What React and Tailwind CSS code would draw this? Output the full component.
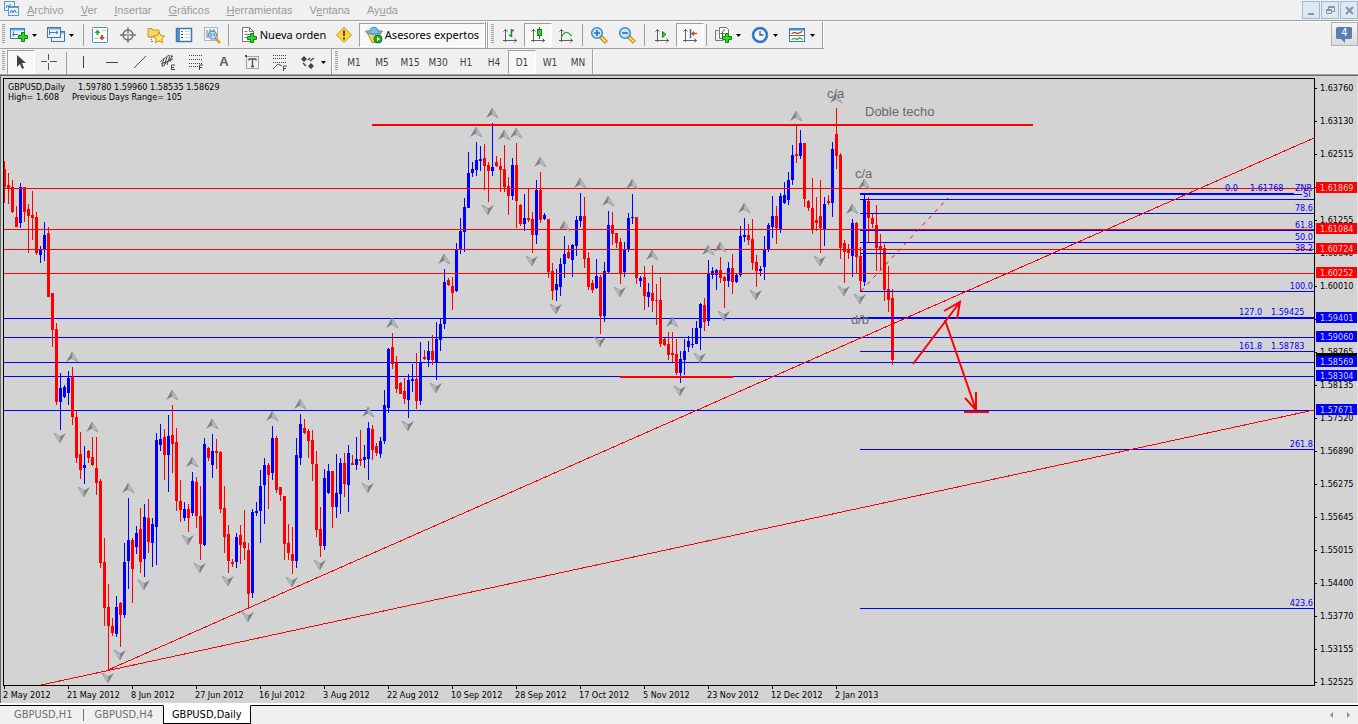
import React, { useState } from 'react';
import clsx from 'clsx';

const RED = '#ff0000';
const BLUE = '#0000ff';
const CHART_BG = '#d3d3d3';

// one entry per daily bar: direction, high, body top, body bottom, low
const BARS = `
r 161 169 187 203|r 173 185 188 204|r 180 187 212 213|r 206 217 227 227|b 183 187 223 228|r 187 187 212 222
r 204 209 216 253|r 191 215 218 240|r 212 217 253 255|b 246 249 255 263|b 222 235 249 261|r 227 233 297 297
r 293 293 330 347|r 323 329 402 405|b 373 388 402 430|b 385 387 397 398|b 371 378 393 405|r 367 377 417 425
r 411 417 458 463|r 432 454 470 479|b 446 465 468 484|r 450 451 458 463|r 437 457 465 466|r 437 468 483 495
r 479 481 563 568|r 538 562 608 626|r 584 607 626 670|r 618 626 633 636|b 596 607 634 637|r 602 603 615 647
b 543 562 615 618|b 498 540 561 589|r 538 540 569 603|b 526 533 547 554|r 508 529 562 573|b 504 517 559 577
r 499 518 542 553|b 518 524 543 567|b 433 440 527 565|b 424 439 445 451|r 429 437 455 480|b 415 436 455 492
r 405 435 444 473|r 428 442 501 511|r 480 501 510 522|b 502 509 518 521|r 504 509 518 532|b 472 481 513 516
r 477 482 516 528|r 486 516 544 560|b 438 444 545 546|r 447 448 458 461|b 434 451 465 478|r 439 451 453 469
r 451 452 509 513|r 486 508 537 553|r 525 534 561 573|r 559 562 564 567|b 533 537 562 568|r 525 535 545 564
r 510 542 548 560|r 543 550 594 609|b 509 512 593 598|b 502 511 513 516|b 470 486 511 543|b 458 465 485 524
r 463 465 475 509|b 426 438 473 480|r 436 438 490 493|r 487 487 495 501|r 496 496 544 560|r 524 543 553 560
r 527 554 561 574|b 438 455 561 568|b 414 424 458 465|r 419 428 433 434|r 429 431 441 458|r 430 440 464 481
r 451 464 530 537|r 507 529 546 557|b 469 478 546 550|b 464 471 493 494|r 471 471 507 528|b 454 493 507 518
b 458 463 494 514|r 453 463 484 497|b 445 453 485 512|r 455 463 465 465|b 437 459 465 470|r 430 459 461 466
b 445 457 460 468|b 422 428 459 480|r 425 429 450 460|r 443 446 453 456|b 437 441 454 458|b 390 405 441 444
b 348 349 408 413|r 333 347 364 369|r 356 363 389 393|r 382 383 394 394|r 378 391 399 404|b 374 380 400 418
b 364 379 381 392|r 353 379 401 409|b 342 362 401 405|r 350 357 359 360|b 341 351 360 367|r 335 351 360 365
b 322 339 362 380|b 319 324 340 351|b 269 282 324 329|r 278 280 285 286|r 277 286 293 310|b 243 249 291 292
b 218 231 249 254|b 198 207 232 252|b 152 173 208 208|b 162 169 173 177|b 142 160 170 176|b 146 159 161 171
r 144 158 166 190|r 162 165 171 202|b 123 167 171 176|r 156 162 166 167|r 158 166 170 192|r 145 169 187 192
r 177 186 196 215|b 158 165 196 200|r 143 165 201 228|r 204 205 224 226|b 194 218 224 231|r 189 218 220 222
r 212 219 235 253|b 180 190 235 244|r 172 190 220 223|b 213 215 219 220|r 219 219 272 278|r 263 271 291 300
b 269 284 290 301|b 258 264 287 296|b 236 254 264 278|r 245 252 258 259|b 244 245 260 277|b 216 220 246 256
b 193 216 221 227|r 197 216 259 268|r 252 258 287 290|r 280 283 290 293|b 259 276 288 289|r 275 277 316 334
b 262 271 316 322|b 211 225 272 273|r 212 225 234 245|r 233 233 243 248|r 238 242 273 284|b 242 250 272 277
b 213 218 249 252|b 194 217 218 224|r 217 217 278 284|b 276 278 281 287|r 266 277 296 310|b 283 292 297 307
r 265 293 301 312|r 284 300 301 325|r 277 300 344 347|r 338 339 345 346|r 332 344 355 360|r 332 353 355 362
r 339 354 373 375|b 351 359 373 383|b 339 351 360 375|b 336 341 347 352|b 328 344 345 348|b 321 328 344 344
b 303 304 328 350|r 298 305 322 331|b 260 273 321 326|b 267 271 275 279|b 269 270 275 290|r 257 270 278 283
r 276 277 281 308|b 262 268 281 287|r 254 268 282 294|b 274 275 282 283|b 226 236 275 277|b 218 235 237 242
r 224 235 240 245|r 219 239 263 270|r 255 262 271 287|b 266 269 271 276|b 236 249 267 280|b 223 225 249 252
b 196 216 227 238|r 206 216 228 244|b 193 196 229 233|b 182 195 203 204|b 172 180 200 205|b 145 155 180 185
r 126 154 156 163|b 130 143 156 159|r 143 143 199 207|r 200 201 208 211|r 178 208 229 234|r 197 220 223 231
r 180 216 228 253|b 197 204 229 246|r 195 201 203 205|b 142 149 203 217|r 108 134 156 169|r 153 155 248 259
r 240 243 252 283|r 244 249 253 259|b 219 223 256 277|r 222 223 257 274|r 247 256 281 291|b 194 199 282 286
r 197 201 218 242|r 214 218 224 228|r 205 225 248 271|r 234 246 250 270|r 244 248 290 301|r 266 289 300 312
r 289 298 360 365`
  .trim()
  .split(/[|\n]/)
  .map((row) => {
    const [dir, ...v] = row.split(' ');
    return { color: dir === 'r' ? RED : BLUE, high: +v[0], top: +v[1], bottom: +v[2], low: +v[3] };
  });

// indexes of the bars that carry a fractal mark
const FRACTALS_UP = [17, 22, 31, 42, 47, 52, 67, 74, 91, 97, 110, 118, 122, 125, 128, 134, 140, 144, 151, 157, 162, 167, 176, 179, 185, 198, 208, 212, 215];
const FRACTALS_DOWN = [14, 20, 26, 29, 35, 46, 49, 56, 61, 72, 79, 91, 101, 108, 121, 132, 138, 149, 154, 169, 174, 180, 188, 204, 210, 214];

const LEVELS = [
  { y: 188, price: '1.61869', color: RED },
  { y: 229, price: '1.61084', color: RED },
  { y: 249, price: '1.60724', color: RED },
  { y: 273, price: '1.60252', color: RED },
  { y: 318, price: '1.59401', color: BLUE },
  { y: 337, price: '1.59060', color: BLUE },
  { y: 362, price: '1.58569', color: BLUE },
  { y: 376, price: '1.58304', color: BLUE },
  { y: 410, price: '1.57671', color: BLUE },
];

const FIBS = [
  { y: 193, thick: true },
  { y: 199 },
  { y: 213, label: '78.6' },
  { y: 230, label: '61.8' },
  { y: 242, label: '50.0' },
  { y: 253, label: '38.2' },
  { y: 291, label: '100.0' },
  { y: 317, thick: true, label: '127.0', price: '1.59425' },
  { y: 351, label: '161.8', price: '1.58783' },
  { y: 449, label: '261.8' },
  { y: 608, label: '423.6' },
];

const PRICES = ['1.63760', '1.63130', '1.62515', '', '1.61255', '1.60640', '1.60010', '', '1.58765', '1.58135', '1.57520', '1.56890', '1.56275', '1.55645', '1.55015', '1.54400', '1.53770', '1.53155', '1.52525'];
const DATES = ['2 May 2012', '21 May 2012', '8 Jun 2012', '27 Jun 2012', '16 Jul 2012', '3 Aug 2012', '22 Aug 2012', '10 Sep 2012', '28 Sep 2012', '17 Oct 2012', '5 Nov 2012', '23 Nov 2012', '12 Dec 2012', '2 Jan 2013'];

const barX = (i) => 4 + i * 4;

function Fractal({ x, y, down }) {
  // the down mark is the up mark turned by 180 degrees
  return (
    <g transform={down ? `translate(${x} ${y + 10}) rotate(180)` : `translate(${x} ${y})`}>
      <path d="M0 0 L-6 10 L0 6.500 Z" fill="#808080" />
      <path d="M0 0 L6 10 L0 6.500 Z" fill="#b4c4d0" stroke="#909090" strokeWidth=".8" />
    </g>
  );
}

function Chart() {
  return (
    <svg viewBox="0 76 1358 627" className="block w-full h-auto bg-[#d3d3d3] font-['DejaVu_Sans_Condensed',Tahoma,sans-serif] text-[9px]" role="img" aria-label="GBPUSD,Daily">
      <rect x="0" y="76" width="1" height="627" fill="#696969" />
      <rect x="1357" y="76" width="1" height="627" fill="#e3e3e3" />

      <g shapeRendering="crispEdges">
        {LEVELS.map((l) => (
          <rect key={l.y} x="4" y={l.y} width="1310" height="1" fill={l.color} />
        ))}
      </g>

      {/* candles */}
      <g shapeRendering="crispEdges">
        {BARS.map((b, i) => (
          <g key={i} fill={b.color}>
            <rect x={barX(i)} y={b.high} width="1" height={b.low - b.high} />
            <rect x={i ? barX(i) - 1 : 4} y={b.top} width={i ? 3 : 2} height={Math.max(1, b.bottom - b.top)} />
          </g>
        ))}
      </g>

      {/* resistance levels and fibonacci run over the bars */}
      <g shapeRendering="crispEdges">
        {LEVELS.filter((l) => l.color === RED).map((l) => (
          <rect key={l.y} x="4" y={l.y} width="1310" height="1" fill={l.color} />
        ))}
        <rect x="372" y="124" width="661" height="2" fill={RED} />
        <rect x="620" y="376" width="113" height="2" fill={RED} />
        {FIBS.map((f) => (
          <rect key={f.y} x="860" y={f.y} width={f.y === 193 ? 434 : 454} height={f.thick ? 2 : 1} fill={BLUE} />
        ))}
        <rect x="1294" y="194" width="8" height="1" fill={BLUE} />
      </g>

      {FRACTALS_UP.map((i) => (
        <Fractal key={i} x={barX(i)} y={BARS[i].high - 15} />
      ))}
      {FRACTALS_DOWN.map((i) => (
        <Fractal key={i} x={barX(i)} y={BARS[i].low + 3} down />
      ))}

      {/* trend lines */}
      <g stroke={RED} fill="none" shapeRendering="crispEdges">
        <path d="M108 670 L1314 138" />
        <path d="M41 685 L1314 410" />
      </g>
      <path d="M861 291 L948 198" stroke={RED} strokeDasharray="4 5" />
      <g stroke={RED} strokeWidth="2" fill="none">
        <path d="M913 364 L960 302 M944 311 L960 302 L957 319" />
        <path d="M945 320 L976 410 M965 398 L976 410 M976 392 V410" />
        <path d="M964 412 H989" />
      </g>

      <g fill="#696969" className="font-['Liberation_Sans',Arial,sans-serif] text-[13px]">
        <text x="827" y="98">c/a</text>
        <text x="865" y="116">Doble techo</text>
        <text x="855" y="178">c/a</text>
        <text x="851" y="324">d/b</text>
      </g>

      <g fill={BLUE}>
        <text x="1225" y="191">0.0</text>
        <text x="1250" y="191">1.61768</text>
        <text x="1295" y="191">ZNR</text>
        <text x="1303" y="197">SI</text>
        {FIBS.filter((f) => f.label).map((f) =>
          f.price ? (
            <g key={f.y}>
              <text x="1239" y={f.y - 2}>{f.label}</text>
              <text x="1271" y={f.y - 2}>{f.price}</text>
            </g>
          ) : (
            <text key={f.y} x="1313" y={f.y - 2} textAnchor="end">{f.label}</text>
          )
        )}
      </g>

      <text x="8" y="90">GBPUSD,Daily</text>
      <text x="78" y="90">1.59780 1.59960 1.58535 1.58629</text>
      <text x="8" y="100">High= 1.608</text>
      <text x="72" y="100">Previous Days Range= 105</text>

      {/* frame and axes */}
      <g shapeRendering="crispEdges">
        <rect x="3" y="78" width="1312" height="1" />
        <rect x="3" y="78" width="1" height="608" />
        <rect x="3" y="685" width="1312" height="1" />
        <rect x="1314" y="78" width="1" height="608" />
        {PRICES.map((p, i) => (
          <rect key={i} x="1315" y={88 + i * 33} width="2" height="1" />
        ))}
        {DATES.map((d, i) => (
          <rect key={d} x={4 + i * 64} y="686" width="1" height="3" />
        ))}
      </g>
      {PRICES.map((p, i) => (
        <text key={i} x="1320" y={91 + i * 33}>{p}</text>
      ))}
      <rect x="1316" y="353" width="41" height="11" />
      {LEVELS.map((l) => (
        <g key={l.y}>
          <rect x="1316" y={l.y - 6} width="41" height="11" fill={l.color} shapeRendering="crispEdges" />
          <text x="1320" y={l.y + 3} fill={CHART_BG}>{l.price}</text>
        </g>
      ))}
      {DATES.map((d, i) => (
        <text key={d} x={3 + i * 64} y="698">{d}</text>
      ))}
    </svg>
  );
}

/* ---------- toolbar icons ---------- */

function Icon({ children, className }) {
  return (
    <svg viewBox="0 0 18 18" className={clsx('w-[18px] h-[18px] shrink-0', className)} fill="none">
      {children}
    </svg>
  );
}

const Plus = ({ x, y }) => (
  <path transform={`translate(${x} ${y})`} d="M3.500 .5h3v3h3v3h-3v3h-3v-3h-3v-3h3z" fill="#2fd62f" stroke="#0a8a0a" />
);

const Window = ({ x = 0, y = 0, w = 12, h = 9 }) => (
  <g transform={`translate(${x} ${y})`}>
    <rect x=".5" y=".5" width={w} height={h} fill="#eaf4fc" stroke="#3b7ab5" />
    <rect x="1" y="1" width={w - 1} height="1.500" fill="#6fa8dc" />
  </g>
);

const Axes = () => (
  <path d="M4.500 3v13M2 14.500h14M2.500 5.500l2-2 2 2M13.500 12.500l2 2-2 2" stroke="#606060" />
);

const ICONS = {
  app: (
    <>
      <rect x="2.500" y="1.500" width="10" height="9" fill="#eaf4fc" stroke="#5b9bd5" />
      <rect x="6.500" y="6.500" width="10" height="9" fill="#eaf4fc" stroke="#5b9bd5" />
      <path d="M4 8l1.500-3 1.500 2 1.500-3M8 13l1.500-3 1.500 3 1.500-3 2 3" stroke="#3b6fb0" />
      <path d="M7 7.500h9" stroke="#5b9bd5" />
    </>
  ),
  newChart: (
    <>
      <Window x={0} y={2} w={14} h={10} />
      <path d="M3.500 5.500v5M2 8.500h6" stroke="#4a7ba8" />
      <Plus x={8} y={6} />
    </>
  ),
  profiles: (
    <>
      <Window x={4} y={5} w={13} h={10} />
      <Window x={0} y={1} w={13} h={10} />
      <path d="M2.500 4v5M2 6.500h9M9 5l2 1.500-2 1.500" stroke="#4a7ba8" />
    </>
  ),
  market: (
    <>
      <rect x="1.500" y="1.500" width="15" height="15" rx="1" fill="#fff" stroke="#4a90d0" />
      <path d="M6.500 3.500l3 3.500h-2v2h-2V7h-2z" fill="#1fae1f" />
      <path d="M11 14.500L8 11h2V9h2v2h2z" fill="#e0401f" />
      <path d="M11 4.500h4M3 12.500h4" stroke="#b9c9d6" />
    </>
  ),
  target: (
    <>
      <circle cx="9" cy="9" r="5" stroke="#707070" strokeWidth="1.500" />
      <path d="M9 1v16M1 9h16" stroke="#707070" strokeWidth="1.300" />
      <circle cx="9" cy="9" r="2" fill="#efefef" />
      <path d="M9 7v4M7 9h4" stroke="#888" />
    </>
  ),
  navigator: (
    <>
      <path d="M1 2.500h4l1 1.500h6v7H1z" fill="#f5d76a" stroke="#c49a24" />
      <path d="M4.500 11v6M5 15.500h2" stroke="#777" strokeDasharray="1 1" />
      <path d="M12 6l1.700 3.600 4 .5-3 2.700.8 4-3.500-2-3.500 2 .8-4-3-2.700 4-.5z" fill="#ffe680" stroke="#c88e10" />
    </>
  ),
  data: (
    <>
      <rect x="1.500" y="2.500" width="15" height="13" fill="#fff" stroke="#3b7ab5" strokeWidth="1.500" />
      <rect x="2" y="3" width="3" height="12" fill="#4a90d0" />
      <path d="M6 5.500h2" stroke="#d04030" />
      <path d="M6 8.500h2M6 11.500h2" stroke="#333" />
      <path d="M9.500 5.500h6M9.500 8.500h6M9.500 11.500h6" stroke="#c6d8e8" />
    </>
  ),
  tester: (
    <>
      <rect x="1.500" y="1.500" width="13" height="13" fill="#f5f8fa" stroke="#a5b8c8" />
      <path d="M4 4v8M7 3v4M11 3v4" stroke="#5e7a92" />
      <path d="M12 12l5 5" stroke="#d9a520" strokeWidth="2.500" />
      <circle cx="9.500" cy="9" r="4" fill="#bfe0f8" stroke="#6592b8" strokeWidth="1.300" />
      <path d="M8 7v4M11 7v3" stroke="#4a7ba8" />
    </>
  ),
  order: (
    <>
      <path d="M2.500 1.500h7l4 4v10h-11z" fill="#fff" stroke="#777" />
      <path d="M9.500 1.500v4h4M4.500 5.500h3M4.500 8.500h6M4.500 11.500h4" stroke="#777" />
      <Plus x={7} y={7} />
    </>
  ),
  warning: (
    <>
      <path d="M9 1.500L16.500 9 9 16.500 1.500 9z" fill="#fbd33c" stroke="#c7940f" strokeLinejoin="round" />
      <path d="M9 4.500v5.500M9 11.500v2" stroke="#6b4700" strokeWidth="2" />
    </>
  ),
  experts: (
    <>
      <path d="M2.500 7h13L12.500 16.500H7z" fill="#f3cf52" stroke="#bd9220" />
      <path d="M5 5c0-5 8-5 8 0 2 0 4-.5 4.500.5-2 3.500-15 3.500-17 0C1 4.500 3 5 5 5z" fill="#79bde8" stroke="#3b83b8" />
      <circle cx="13" cy="13" r="4" fill="#1fae2f" stroke="#0a7d18" />
      <path d="M12 11l3 2-3 2z" fill="#fff" />
    </>
  ),
  bars: (
    <>
      <Axes />
      <path d="M10.500 3v8M8 9.500h2.500M10.500 4.500H13" stroke="#0b8f1a" strokeWidth="1.500" />
    </>
  ),
  candles: (
    <>
      <Axes />
      <path d="M10.500 1v12" stroke="#0b7d14" />
      <rect x="8.500" y="3.500" width="4" height="6" fill="#2fd62f" stroke="#0b7d14" />
    </>
  ),
  line: (
    <>
      <Axes />
      <path d="M4.500 11c3-6 6-6 10-1" stroke="#2fa83a" strokeWidth="1.300" />
    </>
  ),
  zoomIn: (
    <>
      <path d="M10.500 10.500l6 6" stroke="#b8860b" strokeWidth="4" />
      <path d="M11 11l5 5" stroke="#ffe066" strokeWidth="2" />
      <circle cx="7" cy="7" r="5.300" fill="#c7e6fb" stroke="#4088c8" strokeWidth="1.500" />
      <path d="M4 7h6M7 4v6" stroke="#2b6fb0" strokeWidth="1.600" />
    </>
  ),
  zoomOut: (
    <>
      <path d="M10.500 10.500l6 6" stroke="#b8860b" strokeWidth="4" />
      <path d="M11 11l5 5" stroke="#ffe066" strokeWidth="2" />
      <circle cx="7" cy="7" r="5.300" fill="#c7e6fb" stroke="#4088c8" strokeWidth="1.500" />
      <path d="M4 7h6" stroke="#2b6fb0" strokeWidth="1.600" />
    </>
  ),
  scroll: (
    <>
      <Axes />
      <path d="M9.500 5.500l3.500 3-3.500 3z" fill="#35c744" stroke="#0b8f1a" />
    </>
  ),
  shift: (
    <>
      <Axes />
      <path d="M9.500 3v9" stroke="#2b6fb0" strokeWidth="1.500" />
      <path d="M11 7.500h5M13 5.500l-2 2 2 2" stroke="#d04a10" strokeWidth="1.300" />
    </>
  ),
  indicators: (
    <>
      <path d="M5.500 1.500h7l2 2v9h-9z" fill="#fff" stroke="#777" />
      <path d="M1.500 4.500h3M1.500 4.500v10h8" stroke="#777" />
      <path d="M11 4c-2 0-2.500 1-2.500 3v4M6.500 7.500h4" stroke="#555" />
      <Plus x={8} y={7} />
    </>
  ),
  clock: (
    <>
      <circle cx="9" cy="9" r="7" fill="#eaf5ff" stroke="#1b66b8" strokeWidth="2.500" />
      <circle cx="9" cy="9" r="7.500" stroke="#5ba4e6" strokeWidth=".7" />
      <path d="M9 5v4h3.500" stroke="#555" strokeWidth="1.300" />
    </>
  ),
  template: (
    <>
      <rect x="1.500" y="2.500" width="15" height="13" fill="#fff" stroke="#3b7ab5" />
      <path d="M2 3.500h14" stroke="#4a90d0" strokeWidth="2" />
      <path d="M2 9.500h14" stroke="#3b7ab5" />
      <path d="M3.500 7.500l3-1 3 1 5-2" stroke="#c03010" strokeWidth="1.200" />
      <path d="M3.500 13.500l3-1 3 1 2-2 3 2" stroke="#2fa83a" strokeWidth="1.200" />
    </>
  ),
  cursor: <path d="M5 2v12l3-3 2 5 2-1-2-5h4z" fill="#404040" />,
  cross: <path d="M8.500 1v6M8.500 10v7M1 8.500h6M10 8.500h7" stroke="#555" />,
  vline: <path d="M8.500 3v12" stroke="#404040" />,
  hline: <path d="M3 9.500h12" stroke="#404040" />,
  trend: <path d="M3 15L15 3" stroke="#505050" />,
  channel: (
    <>
      <path d="M1 9L10 2M3 14L14 3M2 11l12-5M5 5l-2 8M8 4l-3 9M11 2L8 12M13 2l-2 7" stroke="#555" />
      <path d="M12.500 17v-5H16M12.500 14.500H15M12.500 16.500H16" stroke="#444" />
    </>
  ),
  fibo: (
    <>
      <path d="M2 2.500h14M2 6.500h14M2 10.500h14M2 13.500h9" stroke="#444" strokeDasharray="1 1" />
      <path d="M12.500 17v-5H16M12.500 14.500H15" stroke="#444" />
    </>
  ),
  label: (
    <>
      <rect x="3.500" y="3.500" width="12" height="12" stroke="#555" strokeDasharray="1 1" />
      <path d="M6 6h7M9.500 6v8M6 5.500v2M13 5.500v2M8 13.500h3" stroke="#505050" strokeWidth="1.300" />
      <rect x="2" y="2" width="2" height="2" fill="#444" />
    </>
  ),
  fan: (
    <>
      <path d="M2 2.500h14M2 5.500h14M2 9.500h14" stroke="#444" strokeDasharray="1 1" />
      <path d="M2 16l5-5 4 2M12.500 18v-5H16M12.500 15.500H15" stroke="#505050" />
    </>
  ),
  arrows: (
    <>
      <path d="M5 3l3 3-3 3-3-3zM12 10l3 3-3 3-3-3z" fill="#444" />
      <path d="M4 10l3 3M9 7l2-2M11 8l4-3" stroke="#444" strokeWidth="1.400" />
    </>
  ),
};

const Caret = () => (
  <svg viewBox="0 0 5 3" className="w-[5px] h-[3px] ml-1 shrink-0">
    <path d="M0 0h5L2.500 3z" />
  </svg>
);

function ToolButton({ icon, label, pressed, menu, children, className, onClick }) {
  return (
    <button
      type="button"
      aria-label={label}
      aria-pressed={pressed}
      onClick={onClick}
      className={clsx(
        'flex items-center h-6 shrink-0 border',
        !menu && 'justify-center',
        className || (menu ? 'w-[37px] pl-[2px]' : 'w-7'),
        pressed ? 'border-t-[#a0a0a0] border-l-[#a0a0a0] border-b-white border-r-white bg-[#f8f8f8]' : 'border-transparent'
      )}
    >
      {icon && <Icon>{ICONS[icon]}</Icon>}
      {children}
      {menu && <Caret />}
    </button>
  );
}

const Grip = () => (
  <div className="w-[3px] h-5 mx-[2px] mt-[2px] self-start shrink-0 bg-[repeating-linear-gradient(#a0a0a0_0_1px,#f0f0f0_1px_2px)]" />
);

const Sep = ({ className = 'mx-[2px]' }) => <div className={clsx('w-px h-[22px] shrink-0 bg-[#a0a0a0]', className)} />;

const End = () => <div className="w-[2px] self-stretch shrink-0 border-l border-[#a0a0a0] bg-white" />;

// [text before the access key, access key, rest]
const MENU = [
  ['', 'A', 'rchivo'],
  ['', 'V', 'er'],
  ['', 'I', 'nsertar'],
  ['', 'G', 'ráficos'],
  ['', 'H', 'erramientas'],
  ['V', 'e', 'ntana'],
  ['Ay', 'u', 'da'],
];

const FRAMES = ['M1', 'M5', 'M15', 'M30', 'H1', 'H4', 'D1', 'W1', 'MN'];

export default function App() {
  const [frame, setFrame] = useState('D1');
  const [mode, setMode] = useState('candles');

  return (
    <div className="flex flex-col w-full bg-[#f0f0f0] font-['DejaVu_Sans_Condensed',Tahoma,sans-serif] text-black">
      {/* menu bar */}
      <nav className="flex items-center h-[22px] pl-[2px] border-b border-white shadow-[inset_0_-1px_0_#a0a0a0]">
        <Icon className="mb-[3px] mr-[7px]">{ICONS.app}</Icon>
        <div className="flex flex-1 gap-[17px] pb-px font-['Liberation_Sans',Arial,sans-serif] text-[11px] leading-4 text-[#9a9a9a]">
          {MENU.map(([before, key, rest]) => (
            <a key={rest} href="#" className="whitespace-nowrap">
              {before}<span className="underline">{key}</span>{rest}
            </a>
          ))}
        </div>
        <div className="flex gap-px pb-px">
          {[
            ['Minimizar', 'M5 12h6'],
            ['Restaurar', 'M6.500 7V4.500h6v5H10M4.500 7.500h5v4h-5zM4.500 8.500h5M6.500 5.500h6'],
            ['Cerrar', 'M5 5l7 7M12 5l-7 7'],
          ].map(([name, d], i) => (
            <button key={name} type="button" aria-label={name} className="w-[18px] h-[18px] border border-[#a3b8cc] bg-[#dce9f5]">
              <svg viewBox="0 0 16 16" className="w-4 h-4"><path d={d} fill="none" stroke="#8296a8" strokeWidth={i === 1 ? 1 : 2} /></svg>
            </button>
          ))}
        </div>
      </nav>

      {/* main toolbar */}
      <div className="flex h-[27px]">
        <div className="flex items-center border-b border-[#a0a0a0]">
          <Grip />
          <ToolButton icon="newChart" label="Nuevo gráfico" menu />
          <ToolButton icon="profiles" label="Perfiles" menu />
          <Sep />
          <ToolButton icon="market" label="Observación del mercado" />
          <ToolButton icon="target" label="Ventana de datos" />
          <ToolButton icon="navigator" label="Navegador" />
          <ToolButton icon="data" label="Terminal" />
          <ToolButton icon="tester" label="Probador" />
          <Sep className="ml-[2px] mr-2" />
          <ToolButton icon="order" label="Nueva orden" className="w-[92px]">
            <span className="ml-[2px] font-['Noto_Sans',sans-serif] text-[11px] whitespace-nowrap">Nueva orden</span>
          </ToolButton>
          <ToolButton icon="warning" label="Alertas" className="w-[30px]" />
          <ToolButton icon="experts" label="Asesores expertos" pressed className="w-[126px]">
            <span className="ml-[2px] font-['Noto_Sans',sans-serif] text-[11px] whitespace-nowrap">Asesores expertos</span>
          </ToolButton>
          <End />
          <End />
          <Grip />
          {['bars', 'candles', 'line'].map((m) => (
            <ToolButton key={m} icon={m} label={m} pressed={mode === m} onClick={() => setMode(m)} />
          ))}
          <Sep />
          <ToolButton icon="zoomIn" label="Acercar" />
          <ToolButton icon="zoomOut" label="Alejar" />
          <Sep className="mx-[3px]" />
          <ToolButton icon="scroll" label="Desplazamiento" />
          <ToolButton icon="shift" label="Desplazar gráfico" pressed />
          <Sep className="ml-[2px] mr-1" />
          <ToolButton icon="indicators" label="Indicadores" menu />
          <ToolButton icon="clock" label="Períodos" menu />
          <ToolButton icon="template" label="Plantillas" menu />
          <End />
        </div>
        <button type="button" className="relative ml-auto w-[27px] h-6 flex items-start justify-center pt-1 border border-[#b0b0b0] bg-linear-to-b from-[#f4f4f4] to-[#dcdcdc]">
          <svg viewBox="0 0 18 16" className="absolute w-[18px] h-4">
            <path d="M2 0h13l1 1v10l-1 1H9v4l-4-4H1l-1-1V1z" fill="#5c7cb4" />
          </svg>
          <span className="relative text-[11px] leading-3 text-white">4</span>
        </button>
      </div>

      {/* drawing tools and time frames */}
      <div className="flex items-end h-[25px]">
        <Grip />
        <ToolButton icon="cursor" label="Cursor" pressed />
        <ToolButton icon="cross" label="Cruz" />
        <Sep className="mx-[3px]" />
        <ToolButton icon="vline" label="Línea vertical" />
        <ToolButton icon="hline" label="Línea horizontal" />
        <ToolButton icon="trend" label="Línea de tendencia" />
        <ToolButton icon="channel" label="Canal" />
        <ToolButton icon="fibo" label="Fibonacci" />
        <ToolButton label="Texto">
          <span className="font-['Liberation_Sans',sans-serif] font-bold text-[13px] text-[#606060]">A</span>
        </ToolButton>
        <ToolButton icon="label" label="Etiqueta" />
        <ToolButton icon="fan" label="Abanico" />
        <ToolButton icon="arrows" label="Flechas" menu className="w-[37px] pl-1" />
        <End />
        <Grip />
        {FRAMES.map((f) => (
          <ToolButton key={f} label={f} pressed={frame === f} onClick={() => setFrame(f)}>
            <span className="text-[10px] text-[#404040]">{f}</span>
          </ToolButton>
        ))}
        <End />
      </div>

      <div className="border-t border-t-[#a0a0a0] border-b border-b-[#696969]" />
      <Chart />

      {/* chart tabs */}
      <div className="flex items-stretch h-[21px] pt-[2px] bg-white">
        <div className="flex flex-1 items-stretch border-t border-black bg-[#f0f0f0] text-[11px] leading-4 text-[#6d6d6d]">
          <button type="button" className="pl-[14px] pr-[11px]">GBPUSD,H1</button>
          <span className="w-px my-[3px] bg-[#6d6d6d]" />
          <button type="button" className="px-[10px]">GBPUSD,H4</button>
          <button type="button" className="px-2 -mt-px border border-t-white border-black bg-white text-black">GBPUSD,Daily</button>
          <div className="flex items-center gap-[14px] ml-auto pr-2">
            <svg viewBox="0 0 3 6" className="w-[3px] h-[6px]"><path d="M3 0v6L0 3z" fill="#909090" /></svg>
            <svg viewBox="0 0 3 6" className="w-[3px] h-[6px]"><path d="M0 0v6l3-3z" fill="#909090" /></svg>
          </div>
        </div>
      </div>
    </div>
  );
}
